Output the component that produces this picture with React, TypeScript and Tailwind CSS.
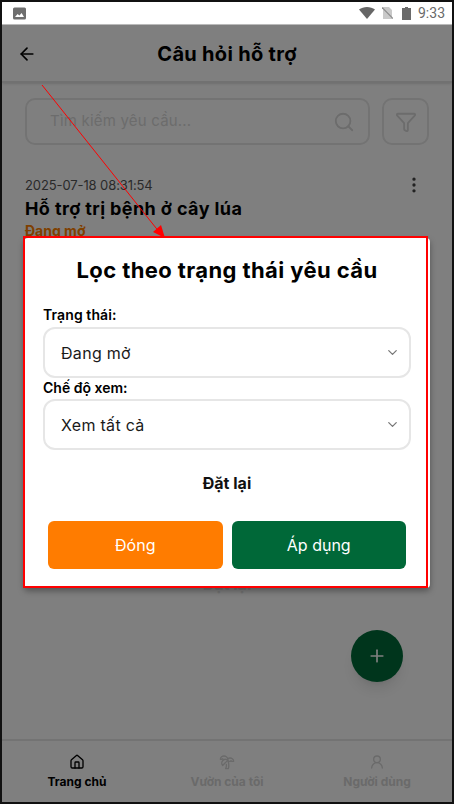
import { ArrowLeft, ChevronDown, Filter, House, MoreVertical, Plus, Search, TreePalm, UserRound } from "lucide-react";

const font = { fontFamily: "Inter, 'Noto Sans', sans-serif" };

function StatusBar() {
  return (
    <div className="flex h-[23px] items-center justify-between border-b border-[#bdbdbd] bg-white pl-[11px] pr-[7px]">
      <svg width="13" height="13" viewBox="0 0 13 13">
        <rect width="13" height="12" y="0.5" rx="1.5" fill="#6e6e6e" />
        <path d="M2 10l2.6-3 1.8 1.6L8.6 6 11 10z" fill="#fff" />
      </svg>
      <div className="flex items-center">
        <svg width="16" height="12" viewBox="0 0 16 12" className="mr-[7px]">
          <path d="M0 2.6C2.2.9 5 0 8 0s5.800.9 8 2.600L8 12z" fill="#666" />
        </svg>
        <svg width="11" height="12" viewBox="0 0 11 12" className="mr-[9px]">
          <path d="M1 0h6l3 3v9H1z" fill="#c9c9c9" />
          <path d="M0 .5L11 11.500" stroke="#8c8c8c" strokeWidth="1.200" />
        </svg>
        <svg width="9" height="13" viewBox="0 0 9 13" className="mr-[7px]">
          <path d="M3 0h3v1h3v12H0V1h3z" fill="#6a6a6a" />
        </svg>
        <span className="text-[14px] leading-none text-[#6a6a6a]" style={{ fontFamily: "Roboto, sans-serif" }}>
          9:33
        </span>
      </div>
    </div>
  );
}

function NavItem({ label, active, children }: { label: string; active?: boolean; children: React.ReactNode }) {
  return (
    <div className="flex flex-1 flex-col items-center">
      {children}
      <span className={`mt-[4px] text-[12px] font-bold leading-[16px] ${active ? "text-black" : "text-[#d4d4d4]"}`}>{label}</span>
    </div>
  );
}

function SelectBox({ value }: { value: string }) {
  return (
    <div className="flex h-[51px] items-center justify-between rounded-[12px] border-2 border-[#e6e6e6] pl-[16px] pr-[9px]">
      <span className="text-[16px] tracking-[0.3px] text-[#1a1a1a]">{value}</span>
      <ChevronDown size={15} className="text-[#777]" />
    </div>
  );
}

export default function App() {
  return (
    <div className="relative h-[804px] w-[454px] overflow-hidden border-2 border-[#111] bg-white" style={font}>
      <StatusBar />
      <div className="relative flex h-[777px] flex-col">
        <div className="flex h-[58px] items-center justify-center border-b-2 border-[#e2e2e2] pt-[1px] shadow-sm">
          <ArrowLeft size={20} className="absolute left-[15px] text-black" />
          <span className="text-[20px] font-bold tracking-[0.3px] text-black">Câu hỏi hỗ trợ</span>
        </div>

        <div className="relative flex-1 px-[23px]">
          <div className="mt-[15px] flex gap-[12px]">
            <div className="flex h-[47px] flex-1 items-center justify-between rounded-[10px] border-2 border-[#e6e6e6] pl-[23px] pr-[13px]">
              <span className="text-[15px] tracking-[0.2px] text-[#d8d8d8]">Tìm kiếm yêu cầu...</span>
              <Search size={22} className="text-[#d8d8d8]" />
            </div>
            <div className="flex h-[47px] w-[47px] items-center justify-center rounded-[10px] border-2 border-[#e6e6e6]">
              <Filter size={22} className="text-[#d8d8d8]" />
            </div>
          </div>
          <div className="mt-[30px]">
            <div className="flex items-center justify-between pr-[5px]">
              <span className="text-[13px] leading-[18px] tracking-[-0.1px] text-[#555]">2025-07-18 08:31:54</span>
              <MoreVertical size={20} className="text-[#444]" />
            </div>
            <div className="mt-[2px] text-[18px] font-bold leading-[24px] tracking-[0.4px] text-black">Hỗ trợ trị bệnh ở cây lúa</div>
            <div className="text-[14px] font-bold leading-[20px] text-[#ff8000]">Đang mở</div>
          </div>
          {/* sliver of the list footer showing under the dialog */}
          <div className="absolute inset-x-0 top-[490px] text-center text-[16px] font-bold leading-[22px] text-[#e6e6e6]">Đặt lại</div>
        </div>

        <button className="absolute right-[49px] top-[605px] flex h-[52px] w-[52px] items-center justify-center rounded-full bg-[#006b38] shadow-lg">
          <Plus size={20} className="text-white" />
        </button>

        <div className="flex h-[63px] border-t-2 border-[#e6e6e6] pt-[13px]">
          <NavItem label="Trang chủ" active>
            <House size={16} className="text-black" />
          </NavItem>
          <NavItem label="Vườn của tôi">
            <TreePalm size={16} className="text-[#d4d4d4]" />
          </NavItem>
          <NavItem label="Người dùng">
            <UserRound size={16} className="text-[#d4d4d4]" />
          </NavItem>
        </div>

        {/* backdrop */}
        <div className="absolute inset-0 bg-black/50" />
      </div>

      {/* filter dialog */}
      <div className="absolute left-[22px] top-[236px] w-[406px] rounded-[4px] bg-white px-[19px] pt-[16px] shadow-[0_3px_6px_rgba(0,0,0,0.35)]">
        <h2 className="text-center text-[22px] font-bold leading-[32px] tracking-[0.4px] text-black">Lọc theo trạng thái yêu cầu</h2>
        <div className="mt-[19px] text-[14px] font-semibold leading-[20px] tracking-[0.1px] text-black">Trạng thái:</div>
        <div className="mt-[2px]">
          <SelectBox value="Đang mở" />
        </div>
        <div className="mt-[-1px] text-[14px] font-semibold leading-[22px] text-black">Chế độ xem:</div>
        <SelectBox value="Xem tất cả" />
        <div className="mt-[22px] text-center text-[16px] font-bold leading-[22px] text-[#111]">Đặt lại</div>
        <div className="mt-[27px] flex gap-[9px] px-[5px] pb-[19px]">
          <button className="h-[48px] flex-1 rounded-[6px] bg-[#ff7c00] text-[16px] text-white">Đóng</button>
          <button className="h-[48px] flex-1 rounded-[6px] bg-[#006838] text-[16px] text-white">Áp dụng</button>
        </div>
      </div>

      {/* red annotation */}
      <div className="absolute left-[20.500px] top-[234px] h-[352px] w-[405.500px] border-2 border-[#f00]" />
      <svg className="absolute left-0 top-0" width="450" height="800" viewBox="2 2 450 800">
        <path d="M42 85L160 233" stroke="#f00" strokeWidth="1" fill="none" />
        <path d="M165 238L153 232L161 225z" fill="#f00" />
      </svg>
    </div>
  );
}
